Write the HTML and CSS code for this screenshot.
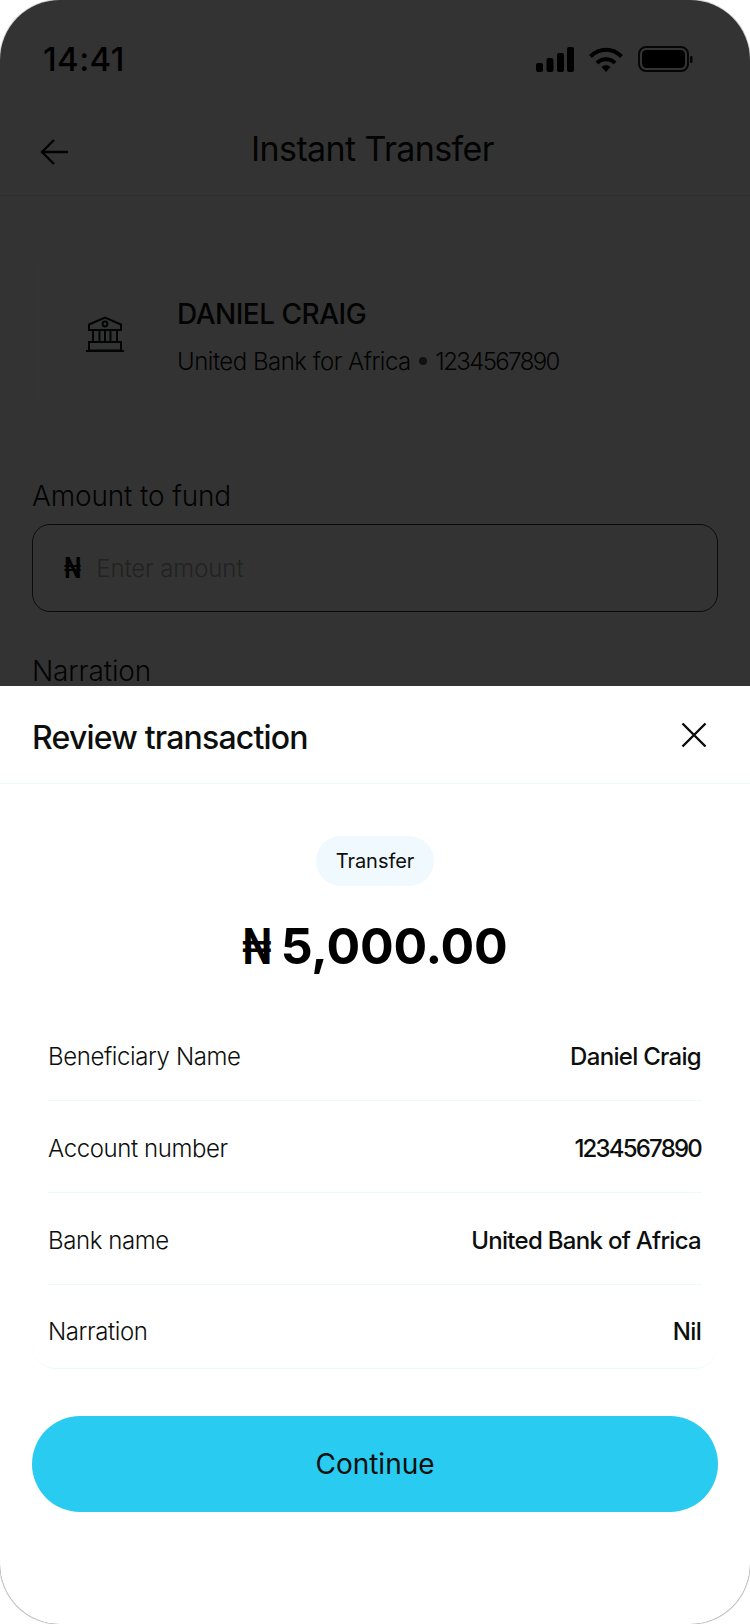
FILE: index.html
```html
<!DOCTYPE html>
<html lang="en">
<head>
    <meta charset="UTF-8">
    <meta name="viewport" content="width=device-width, initial-scale=1.0">
    <title>Instant Transfer</title>
    <link rel="stylesheet" href="styles.css">
</head>
<body>
    <div class="phone">
        <div class="status-bar">
            <span class="time">14:41</span>
            <div class="status-icons">
                <svg class="icon-signal" width="38" height="25" viewBox="0 0 38 25" fill="#000">
                    <rect x="0" y="16" width="7" height="9" rx="2"/>
                    <rect x="10.5" y="11" width="7" height="14" rx="2"/>
                    <rect x="21" y="6" width="7" height="19" rx="2"/>
                    <rect x="31" y="0" width="7" height="25" rx="2"/>
                </svg>
                <svg class="icon-wifi" width="34" height="25" viewBox="0 0 34 25" fill="none" stroke="#000" stroke-width="4">
                    <path d="M1.5 9.5C10.5 .5 23.5 .5 32.5 9.5"/>
                    <path d="M8 16C13 11 21 11 26 16"/>
                    <path d="M12.500 20 17 25 21.500 20C19 17.500 15 17.500 12.500 20Z" fill="#000" stroke="none"/>
                </svg>
                <svg class="icon-battery" width="55" height="26" viewBox="0 0 55 26">
                    <rect x="1" y="1" width="49" height="24" rx="7" fill="none" stroke="#1e1e1e" stroke-width="2"/>
                    <rect x="4" y="4" width="43" height="18" rx="4.500" fill="#000"/>
                    <rect x="52" y="10" width="2.500" height="7" rx="1" fill="#1e1e1e"/>
                </svg>
            </div>
        </div>

        <header class="top-bar">
            <svg class="back-icon" width="28" height="26" viewBox="0 0 28 26" fill="none" stroke="#0a0a0a" stroke-width="2.400">
                <path d="M14 1 2 13 14 25"/>
                <path d="M2 13H28"/>
            </svg>
            <h1>Instant Transfer</h1>
        </header>

        <main class="form">
            <div class="beneficiary-card">
                <div class="bank-circle">
                    <svg width="38" height="36" viewBox="0 0 38 36" fill="none" stroke="#0c1a12" stroke-width="2">
                        <path d="M3 14V8.500L19 1.500 35 8.500V14Z"/>
                        <circle cx="19" cy="8" r="2.400"/>
                        <path d="M7 14V26M13.500 14V26M19 14V26M24.500 14V26M31 14V26"/>
                        <path d="M3 26H35V34.500H3Z"/>
                        <path d="M0 35H38"/>
                    </svg>
                </div>
                <div class="beneficiary-text">
                    <div class="beneficiary-name">DANIEL CRAIG</div>
                    <div class="beneficiary-bank">United Bank for Africa <span class="dot"></span> <span class="num">1234567890</span></div>
                </div>
            </div>

            <label class="field-label">Amount to fund</label>
            <div class="amount-input">
                <span class="naira">₦</span>
                <span class="placeholder">Enter amount</span>
            </div>

            <label class="field-label narration-label">Narration</label>
        </main>

        <div class="scrim"></div>

        <section class="sheet">
            <div class="sheet-header">
                <h2>Review transaction</h2>
                <svg width="26" height="26" viewBox="0 0 26 26" fill="none" stroke="#0a0a0a" stroke-width="2.400">
                    <path d="M1.500 1.500 24.500 24.500M24.500 1.500 1.500 24.500"/>
                </svg>
            </div>
            <div class="sheet-body">
                <span class="pill">Transfer</span>
                <div class="total"><span class="total-sign">₦</span> 5,000.00</div>
                <div class="details">
                    <div class="row"><span>Beneficiary Name</span><strong>Daniel Craig</strong></div>
                    <div class="row"><span>Account number</span><strong class="num">1234567890</strong></div>
                    <div class="row"><span>Bank name</span><strong>United Bank of Africa</strong></div>
                    <div class="row"><span>Narration</span><strong>Nil</strong></div>
                </div>
                <button class="continue">Continue</button>
            </div>
        </section>
    </div>
</body>
</html>
```
FILE: styles.css
```css
/* page + device frame */
* {
    box-sizing: border-box;
}
body {
    margin: 0;
    background-color: #fff;
    font-family: Inter, "Noto Sans", sans-serif;
    color: #0c0f0d;
}
.phone {
    position: relative;
    width: 750px;
    height: 1624px;
    border-radius: 60px;
    overflow: hidden;
    background-color: #fff;
    box-shadow: 0 0 0 1px #d4d4d4;
}
.num {
    letter-spacing: -1.6px;
}

/* status bar */
.status-bar {
    display: flex;
    justify-content: space-between;
    align-items: center;
    height: 118px;
    padding: 0 57px 0 43px;
}
.time {
    font-size: 33px;
    font-weight: 500;
    letter-spacing: 0.4px;
    color: #000;
}
.status-icons {
    display: flex;
    align-items: center;
    gap: 15px;
}

/* top bar */
.top-bar {
    position: relative;
    display: flex;
    justify-content: center;
    align-items: center;
    height: 78px;
    border-bottom: 1px solid #e4e4e4;
}
.top-bar h1 {
    margin: 0 5px 17px 0;
    font-size: 34px;
    font-weight: 400;
    letter-spacing: -0.6px;
}
.back-icon {
    position: absolute;
    left: 40px;
    top: 21px;
}

/* background form */
.form {
    padding: 52px 32px 0;
}
.beneficiary-card {
    display: flex;
    align-items: center;
    gap: 33px;
    height: 172px;
    padding-left: 33px;
    border: 1px solid #fbfbfb;
    border-radius: 20px;
}
.bank-circle {
    display: flex;
    justify-content: center;
    align-items: center;
    width: 78px;
    height: 78px;
    border-radius: 50%;
    background-color: #fbfcfb;
}
.beneficiary-name {
    margin: 4px 0 16px;
    font-size: 28px;
    font-weight: 500;
    letter-spacing: -0.5px;
}
.beneficiary-bank {
    font-size: 24px;
    font-weight: 300;
    letter-spacing: -0.5px;
}
.dot {
    display: inline-block;
    width: 8px;
    height: 8px;
    margin: 0 2px;
    border-radius: 50%;
    background-color: #555;
    vertical-align: 5px;
}
.field-label {
    display: block;
    margin-top: 59px;
    font-size: 28px;
    font-weight: 300;
    letter-spacing: -0.15px;
}
.amount-input {
    display: flex;
    align-items: center;
    gap: 15px;
    height: 88px;
    margin-top: 11px;
    padding-left: 31px;
    border: 1px solid #333;
    border-radius: 18px;
}
.naira {
    display: inline-block;
    margin: 0 -2px;
    font-size: 28px;
    font-weight: 700;
    transform: scaleX(0.8);
}
.placeholder {
    font-size: 24px;
    font-weight: 300;
    letter-spacing: -0.1px;
    color: #aaa;
}
.narration-label {
    margin-top: 42px;
}

/* dim layer and bottom sheet */
.scrim {
    position: absolute;
    inset: 0;
    background-color: rgba(0, 0, 0, 0.8);
}
.sheet {
    position: absolute;
    left: 0;
    right: 0;
    top: 686px;
    bottom: 0;
    background-color: #fff;
}
.sheet-header {
    display: flex;
    justify-content: space-between;
    align-items: center;
    height: 98px;
    padding: 0 43px 0 32px;
    border-bottom: 1px solid #eef9fb;
}
.sheet-header h2 {
    margin: 6px 0 0;
    font-size: 32px;
    font-weight: 500;
    letter-spacing: -0.8px;
}
.sheet-body {
    display: flex;
    flex-direction: column;
    align-items: center;
    padding: 52px 32px 0;
}
.pill {
    display: flex;
    align-items: center;
    height: 50px;
    padding: 0 20px;
    border-radius: 25px;
    background-color: #f0f9fd;
    font-size: 20px;
    letter-spacing: -0.05px;
}
.total {
    margin-top: 30px;
    font-size: 50px;
    font-weight: 700;
    letter-spacing: -0.2px;
    color: #000;
}
.total-sign {
    display: inline-block;
    margin: 0 -7px 0 -4px;
    transform: scaleX(0.77);
}
.details {
    width: 100%;
    margin-top: 33px;
    padding: 0 16px;
    border-bottom: 1px solid #eef9fb;
    border-radius: 24px;
}
.row {
    display: flex;
    justify-content: space-between;
    align-items: center;
    height: 92px;
    padding-top: 4px;
    font-size: 24px;
    font-weight: 300;
    letter-spacing: -0.4px;
    border-bottom: 1px solid #eef9fb;
}
.row:last-child {
    height: 83px;
    padding-top: 10px;
    border-bottom: none;
}
.row strong {
    margin-right: 1px;
    font-weight: 500;
    letter-spacing: -0.7px;
}
.row strong.num {
    letter-spacing: -1.8px;
}
.continue {
    width: 100%;
    height: 96px;
    margin-top: 47px;
    border: none;
    border-radius: 48px;
    background-color: #29cbf0;
    color: #0c0f0d;
    font-family: inherit;
    font-size: 28px;
    font-weight: 400;
}
```
